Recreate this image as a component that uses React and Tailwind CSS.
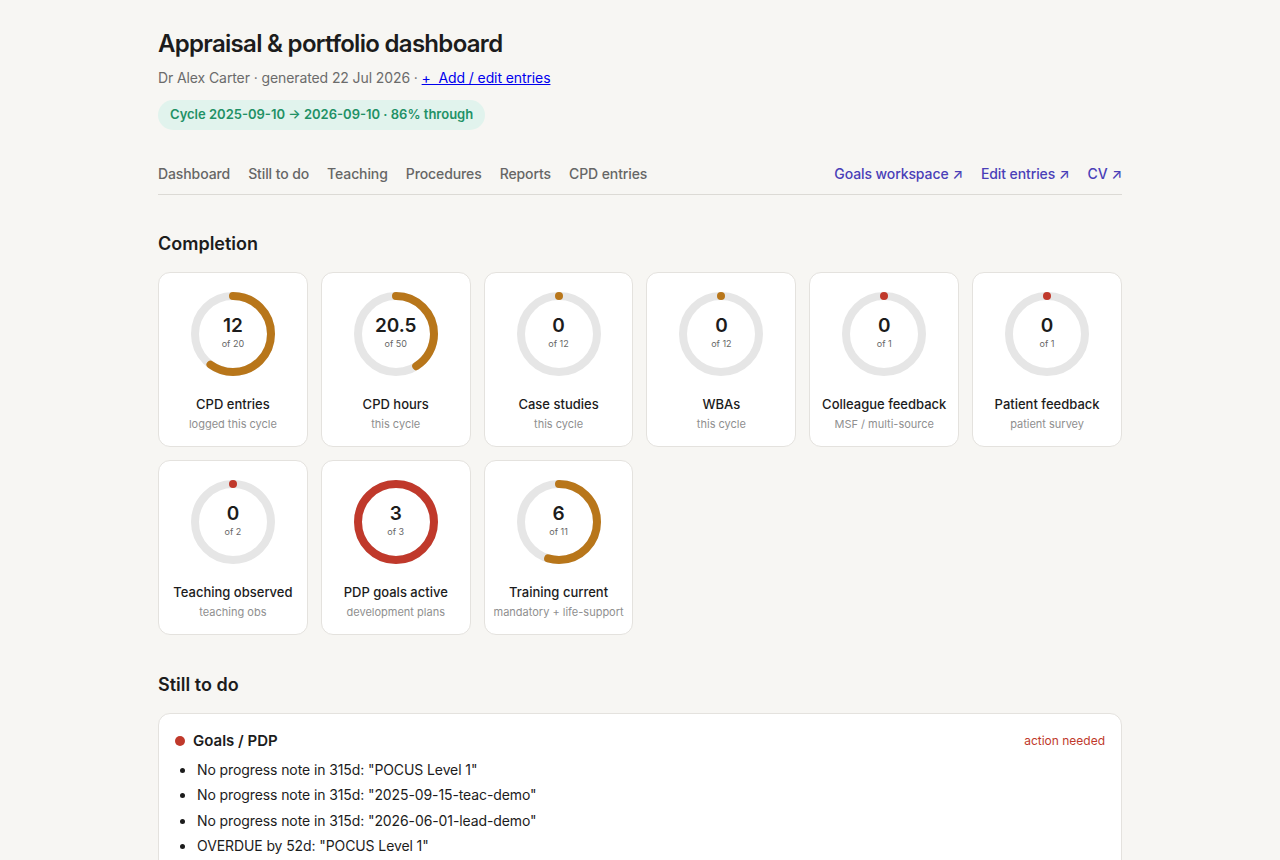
import React from "react";

const ORANGE = "#b8761a";
const RED = "#c0392b";

function Ring({ value, max, color }) {
  const r = 38;
  const c = 2 * Math.PI * r;
  const frac = Math.min(value / max, 1);
  const len = frac === 0 ? 0.001 : frac * c;
  return (
    <svg width="84" height="84" viewBox="0 0 84 84" className="block">
      <circle cx="42" cy="42" r={r} fill="none" stroke="#e6e6e6" strokeWidth="8" />
      <circle
        cx="42"
        cy="42"
        r={r}
        fill="none"
        stroke={color}
        strokeWidth="8"
        strokeLinecap={frac >= 1 ? "butt" : "round"}
        strokeDasharray={`${len} ${c}`}
        transform="rotate(-90 42 42)"
      />
    </svg>
  );
}

const cards = [
  { v: 12, vs: "12", max: 20, color: ORANGE, label: "CPD entries", sub: "logged this cycle" },
  { v: 20.5, vs: "20.5", max: 50, color: ORANGE, label: "CPD hours", sub: "this cycle" },
  { v: 0, vs: "0", max: 12, color: ORANGE, label: "Case studies", sub: "this cycle" },
  { v: 0, vs: "0", max: 12, color: ORANGE, label: "WBAs", sub: "this cycle" },
  { v: 0, vs: "0", max: 1, color: RED, label: "Colleague feedback", sub: "MSF / multi-source" },
  { v: 0, vs: "0", max: 1, color: RED, label: "Patient feedback", sub: "patient survey" },
  { v: 0, vs: "0", max: 2, color: RED, label: "Teaching observed", sub: "teaching obs" },
  { v: 3, vs: "3", max: 3, color: RED, label: "PDP goals active", sub: "development plans" },
  { v: 6, vs: "6", max: 11, color: ORANGE, label: "Training current", sub: "mandatory + life-support" },
];

export default function App() {
  return (
    <div
      className="min-h-screen bg-[#f7f6f3] text-[#1c1c1c]"
      style={{ fontFamily: "Inter, 'Noto Sans', sans-serif" }}
    >
      <div className="mx-auto w-[964px] pt-[28px]">
        <h1 className="text-[24px] font-semibold leading-[32px] tracking-[-0.7px] text-[#1c1c1c]">
          Appraisal &amp; portfolio dashboard
        </h1>
        <p className="mt-[8px] text-[14px] leading-[20px] tracking-[-0.1px] text-[#6b6b6b]">
          Dr Alex Carter · generated 22 Jul 2026 ·{" "}
          <a href="#" className="text-[#0000ee] underline">+&nbsp; Add / edit entries</a>
        </p>
        <div className="mt-[12px] inline-flex h-[30px] items-center rounded-full bg-[#e1f3ed] px-[12px] text-[13px] font-semibold text-[#1f9166]">
          Cycle 2025-09-10 → 2026-09-10 · 86% through
        </div>

        <nav className="mt-[33px] flex items-center justify-between border-b border-[#dcdad5] pb-[10px] text-[14px] font-medium tracking-[-0.1px]">
          <div className="flex gap-[18px] text-[#666666]">
            <span>Dashboard</span>
            <span>Still to do</span>
            <span>Teaching</span>
            <span>Procedures</span>
            <span>Reports</span>
            <span>CPD entries</span>
          </div>
          <div className="flex gap-[18px] text-[#4a3fb8]">
            <span>Goals workspace ↗</span>
            <span>Edit entries ↗</span>
            <span>CV ↗</span>
          </div>
        </nav>

        <h2 className="mt-[37px] text-[18px] font-semibold leading-[24px]">Completion</h2>
        <div className="mt-[16px] grid grid-cols-6 gap-[13px]">
          {cards.map((c) => (
            <div
              key={c.label}
              className="flex h-[175px] flex-col items-center rounded-[12px] border border-[#e4e2de] bg-white pt-[19px]"
            >
              <div className="relative h-[84px] w-[84px]">
                <Ring value={c.v} max={c.max} color={c.color} />
                <div className="absolute inset-0 flex flex-col items-center justify-center">
                  <div className="mt-[-3px] text-[19px] font-semibold leading-[22px] text-[#1c1c1c]">{c.vs}</div>
                  <div className="mt-[1px] text-[9px] leading-[12px] text-[#666]">of {c.max}</div>
                </div>
              </div>
              <div className="mt-[19px] text-[13px] font-medium leading-[18px] text-[#1c1c1c]">{c.label}</div>
              <div className="mt-[3px] text-[11px] leading-[16px] text-[#8f8f8f]">{c.sub}</div>
            </div>
          ))}
        </div>

        <h2 className="mt-[38px] text-[18px] font-semibold leading-[24px]">Still to do</h2>
        <div className="mt-[16px] rounded-[12px] border border-[#e4e2de] bg-white px-[16px] pt-[16px] pb-[16px]">
          <div className="flex items-center justify-between">
            <div className="flex items-center gap-[8px]">
              <span className="h-[10px] w-[10px] rounded-full bg-[#c0392b]"></span>
              <span className="text-[15px] font-semibold leading-[22px]">Goals / PDP</span>
            </div>
            <span className="text-[12px] text-[#c0392b]">action needed</span>
          </div>
          <ul className="mt-[5px] list-disc pl-[21px] text-[14px] leading-[25.3px] tracking-[-0.1px] text-[#1c1c1c]">
            <li className="pl-[1px]">No progress note in 315d: "POCUS Level 1"</li>
            <li className="pl-[1px]">No progress note in 315d: "2025-09-15-teac-demo"</li>
            <li className="pl-[1px]">No progress note in 315d: "2026-06-01-lead-demo"</li>
            <li className="pl-[1px]">OVERDUE by 52d: "POCUS Level 1"</li>
          </ul>
        </div>
        <div className="h-[40px]"></div>
      </div>
    </div>
  );
}
